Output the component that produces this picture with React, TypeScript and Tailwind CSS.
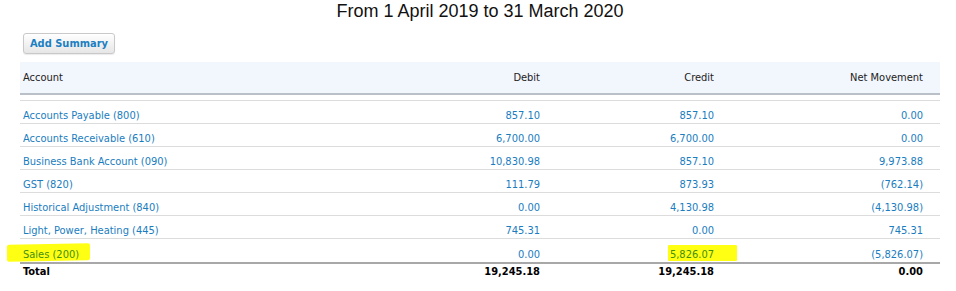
import React from "react";

type Row = { name: string; debit: string; credit: string; net: string; hl?: boolean };

const rows: Row[] = [
  { name: "Accounts Payable (800)", debit: "857.10", credit: "857.10", net: "0.00" },
  { name: "Accounts Receivable (610)", debit: "6,700.00", credit: "6,700.00", net: "0.00" },
  { name: "Business Bank Account (090)", debit: "10,830.98", credit: "857.10", net: "9,973.88" },
  { name: "GST (820)", debit: "111.79", credit: "873.93", net: "(762.14)" },
  { name: "Historical Adjustment (840)", debit: "0.00", credit: "4,130.98", net: "(4,130.98)" },
  { name: "Light, Power, Heating (445)", debit: "745.31", credit: "0.00", net: "745.31" },
  { name: "Sales (200)", debit: "0.00", credit: "5,826.07", net: "(5,826.07)", hl: true },
];

const font = { fontFamily: '"DejaVu Sans Condensed", "DejaVu Sans", sans-serif' };

export default function App() {
  return (
    <div className="w-[956px] h-[291px] bg-white overflow-hidden relative" style={font}>
      <div
        className="text-center text-[18px] leading-[21px] pt-[1px] text-[#111] ml-[20px] w-[920px]"
        style={{ fontFamily: '"Liberation Sans", Arial, sans-serif' }}
      >
        From 1 April 2019 to 31 March 2020
      </div>
      <div className="flex pl-[23px] pt-[11px]">
        <button
          className="flex items-center justify-center h-[21px] w-[92px] rounded-[3px] border border-[#c9c9c9] bg-gradient-to-b from-white to-[#e6e6e6] text-[11px] font-bold text-[#1b7fc2] leading-none shadow-[0_1px_1px_rgba(0,0,0,0.08)]"
          style={font}
        >
          Add Summary
        </button>
      </div>
      <div className="ml-[20px] w-[920px] mt-[8px] text-[11px]">
        <div className="grid grid-cols-[363px_174px_174px_209px] h-[33px] bg-[#f2f6fd] border-b-2 border-[#b9c0c8] items-center text-[#222]">
          <div className="pl-[3px] pt-[2px]">Account</div>
          <div className="text-right pr-[17px] pt-[2px]">Debit</div>
          <div className="text-right pr-[17px] pt-[2px]">Credit</div>
          <div className="text-right pr-[17px] pt-[2px]">Net Movement</div>
        </div>
        <div className="h-[6px] border-b border-[#dcdcdc]" />
        {rows.map((r, i) => (
          <div
            key={r.name}
            className={
              "grid grid-cols-[363px_174px_174px_209px] h-[23px] items-end pb-[1px] leading-[13px] text-[#1a7dc0] " +
              (i < rows.length - 1 ? "border-b border-[#dcdcdc]" : "")
            }
          >
            <div className="pl-[3px] relative">
              {r.hl && (
                <span className="absolute left-[-13px] top-[-4px] w-[83px] h-[17px] bg-[#ffff14] -skew-y-1 rounded-[2px]" />
              )}
              <span className={"relative " + (r.hl ? "text-[#3f8f12]" : "")}>{r.name}</span>
            </div>
            <div className="text-right pr-[17px]">{r.debit}</div>
            <div className="text-right pr-[17px] relative">
              {r.hl && (
                <span className="absolute right-[-6px] top-[-3px] w-[69px] h-[16px] bg-[#ffff14] rounded-[1px]" />
              )}
              <span className={"relative " + (r.hl ? "text-[#3f8f12]" : "")}>{r.credit}</span>
            </div>
            <div className="text-right pr-[17px]">{r.net}</div>
          </div>
        ))}
        <div className="grid grid-cols-[363px_174px_174px_209px] h-[20px] border-t-2 border-[#a8a8a8] items-start pt-[1px] font-bold text-black leading-[13px]">
          <div className="pl-[3px]">Total</div>
          <div className="text-right pr-[17px]">19,245.18</div>
          <div className="text-right pr-[17px]">19,245.18</div>
          <div className="text-right pr-[17px]">0.00</div>
        </div>
      </div>
    </div>
  );
}
